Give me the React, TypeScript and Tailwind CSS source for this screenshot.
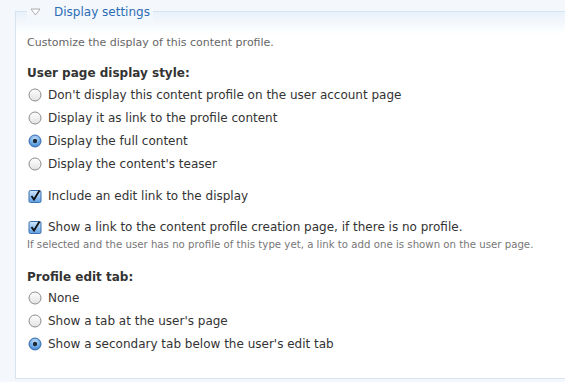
import React from "react";

const font = { fontFamily: "Verdana, 'DejaVu Sans', sans-serif" };

const Radio = ({ checked }: { checked?: boolean }) => (
  <svg width="14" height="14" viewBox="0 0 14 14" className="shrink-0">
    <defs>
      <linearGradient id="rg" x1="0" y1="0" x2="0" y2="1">
        <stop offset="0" stopColor="#ffffff" />
        <stop offset="1" stopColor="#e2e2e2" />
      </linearGradient>
      <radialGradient id="rb" cx="0.5" cy="0.35" r="0.7">
        <stop offset="0" stopColor="#cfe6fb" />
        <stop offset="0.6" stopColor="#6aa8e6" />
        <stop offset="1" stopColor="#2f74c8" />
      </radialGradient>
    </defs>
    <circle
      cx="7"
      cy="7"
      r="6"
      fill={checked ? "url(#rb)" : "url(#rg)"}
      stroke={checked ? "#3b6fae" : "#8d8d8d"}
      strokeWidth="1"
    />
    {checked && <circle cx="7" cy="7" r="2.2" fill="#1c2a3a" />}
  </svg>
);

const Check = () => (
  <svg width="14" height="14" viewBox="0 0 14 14" className="shrink-0">
    <defs>
      <linearGradient id="cb" x1="0" y1="0" x2="0" y2="1">
        <stop offset="0" stopColor="#d3e8fb" />
        <stop offset="1" stopColor="#5c9fe2" />
      </linearGradient>
    </defs>
    <rect x="1" y="1.5" width="12" height="12" rx="1.5" fill="url(#cb)" stroke="#3b6fae" />
    <path d="M3.5 7 L6 10.5 L11.5 1.5" fill="none" stroke="#111" strokeWidth="1.8" />
  </svg>
);

const Option = ({ label, checked }: { label: string; checked?: boolean }) => (
  <label className="flex items-center gap-[6px] h-[23px] pl-[1px]">
    <Radio checked={checked} />
    <span>{label}</span>
  </label>
);

export default function App() {
  return (
    <div className="w-[565px] h-[382px] overflow-hidden bg-[#f4f8fc] text-[12px] text-[#333]" style={font}>
      <div className="pt-[11px] pl-[15px]">
        <fieldset className="relative h-[368px] border border-[#d6e4f2] border-r-0 bg-gradient-to-b from-[#e9f1fa] via-white to-white bg-[length:100%_45px] bg-no-repeat bg-white">
          <div className="absolute -top-[8px] left-[11px] flex items-center gap-[13px] bg-[#f4f8fc] px-[3px] h-[16px] text-[12px] text-[#2c6db5]">
            <svg width="11" height="8" viewBox="0 0 11 8">
              <path d="M1 1 L10 1 L5.5 7 Z" fill="#fff" stroke="#9a9a9a" strokeWidth="0.8" />
            </svg>
            <span>Display settings</span>
          </div>
          <div className="pl-[11px] pt-[23px]">
            <p className="text-[11px] text-[#666]">Customize the display of this content profile.</p>
            <p className="mt-[12px] font-bold">User page display style:</p>
            <div className="mt-[2px]">
              <Option label="Don't display this content profile on the user account page" />
              <Option label="Display it as link to the profile content" />
              <Option label="Display the full content" checked />
              <Option label="Display the content's teaser" />
            </div>
            <label className="mt-[9px] flex items-center gap-[6px] h-[23px] pl-[1px]">
              <Check />
              <span>Include an edit link to the display</span>
            </label>
            <label className="mt-[8px] flex items-center gap-[6px] h-[23px] pl-[1px]">
              <Check />
              <span>Show a link to the content profile creation page, if there is no profile.</span>
            </label>
            <p className="text-[10.2px] text-[#777] leading-[12px]">
              If selected and the user has no profile of this type yet, a link to add one is shown on the user page.
            </p>
            <p className="mt-[17px] font-bold">Profile edit tab:</p>
            <div className="mt-[1px]">
              <Option label="None" />
              <Option label="Show a tab at the user's page" />
              <Option label="Show a secondary tab below the user's edit tab" checked />
            </div>
          </div>
        </fieldset>
      </div>
    </div>
  );
}
